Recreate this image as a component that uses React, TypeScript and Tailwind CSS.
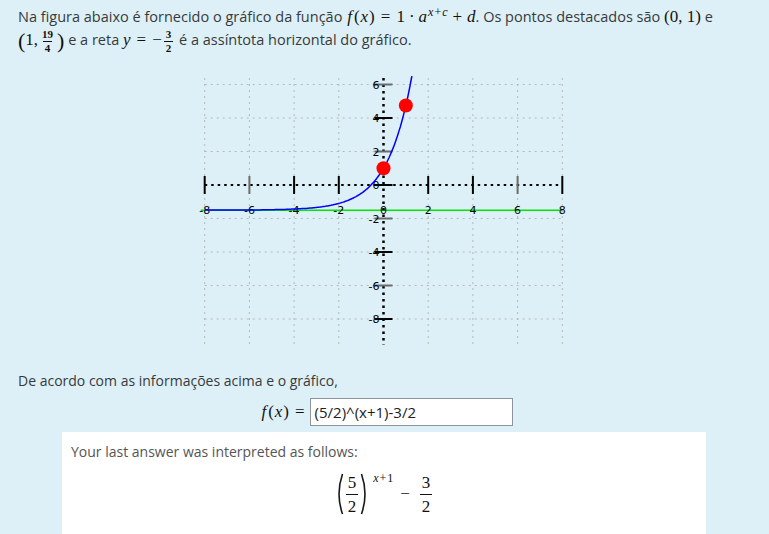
import React from "react";

const math = "font-['Liberation_Serif','DejaVu_Serif',serif] text-[17px] text-[#111]";

const Frac: React.FC<{ n: string; d: string; size?: string; pad?: string }> = ({ n, d, size = "text-[11px] font-bold", pad = "py-[1px]" }) => (
  <span className={`inline-flex flex-col items-center align-middle mx-[2px] leading-none ${size}`}>
    <span className={`px-[2px] ${pad}`}>{n}</span>
    <span className={`px-[2px] ${pad} border-t border-[#111]`}>{d}</span>
  </span>
);

const Op: React.FC<{ c: string; m?: string }> = ({ c, m = "mx-[5px]" }) => <span className={m}>{c}</span>;

const Fx: React.FC = () => (
  <>
    <i className="ml-[1px] mr-[2px]">f</i>(<i className="mx-[1px]">x</i>)
  </>
);

const BigParen: React.FC<{ right?: boolean }> = ({ right }) => (
  <svg width={8} height={42} viewBox="0 0 8 42" className="shrink-0">
    <path
      d={right ? "M1.5 1 Q8.5 21 1.5 41" : "M6.5 1 Q-0.5 21 6.5 41"}
      fill="none"
      stroke="#1a1a1a"
      strokeWidth={1.6}
    />
  </svg>
);

const X = (u: number) => 198.5 + 22.35 * u;
const Y = (v: number) => 120 - 16.75 * v;

const Graph: React.FC = () => {
  const evens = [-8, -6, -4, -2, 0, 2, 4, 6, 8];
  const yEvens = [6, 4, 2, 0, -2, -4, -6, -8];
  const grayX = [-6, 6];
  const grayY = [6, 2, -2, -6];
  const f = (u: number) => Math.pow(2.5, u + 1) - 1.5;
  const pts: string[] = [];
  for (let u = -8; u <= 1.27; u += 0.05) pts.push(`${X(u).toFixed(1)},${Y(f(u)).toFixed(1)}`);
  pts.push(`${X(1.27).toFixed(1)},${Y(f(1.27)).toFixed(1)}`);
  const label = { fontSize: 11, fontFamily: "'DejaVu Sans', sans-serif" };

  return (
    <svg width={400} height={290} viewBox="0 0 400 290">
      {/* grid */}
      {evens.map((u) =>
        u === 0 ? null : (
          <line key={`gv${u}`} x1={X(u)} x2={X(u)} y1={13} y2={280} stroke="#b4b8ba" strokeWidth={1} strokeDasharray="2 4" />
        )
      )}
      {yEvens.map((v) =>
        v === 0 ? null : (
          <line key={`gh${v}`} x1={X(-8)} x2={X(8)} y1={Y(v)} y2={Y(v)} stroke="#b4b8ba" strokeWidth={1} strokeDasharray="2 4" />
        )
      )}
      {/* asymptote */}
      <line x1={X(-8) - 4} x2={X(8)} y1={Y(-1.5)} y2={Y(-1.5)} stroke="#00e600" strokeWidth={1.5} />
      {/* axes */}
      <line x1={X(-8)} x2={X(8)} y1={Y(0)} y2={Y(0)} stroke="#000" strokeWidth={2} strokeDasharray="2.5 4" />
      <line x1={X(0)} x2={X(0)} y1={13} y2={280} stroke="#000" strokeWidth={2.5} strokeDasharray="2.5 4" />
      {evens.map((u) =>
        u === 0 ? null : (
          <line key={`tx${u}`} x1={X(u)} x2={X(u)} y1={Y(0) - 9} y2={Y(0) + 9} stroke={grayX.includes(u) ? "#6b6b6b" : "#000"} strokeWidth={2} />
        )
      )}
      {yEvens.map((v) => (
        <line key={`ty${v}`} x1={X(0) - 9} x2={X(0) + 9} y1={Y(v)} y2={Y(v)} stroke={grayY.includes(v) ? "#6b6b6b" : "#000"} strokeWidth={2} />
      ))}
      {/* labels */}
      {evens.map((u) => (
        <text key={`lx${u}`} x={X(u)} y={Y(-1.5) + 4} textAnchor="middle" style={label}>
          {u}
        </text>
      ))}
      {yEvens.map((v) => (
        <text key={`ly${v}`} x={X(0) - 4} y={Y(v) + 4} textAnchor="end" style={label}>
          {v}
        </text>
      ))}
      {/* curve */}
      <polyline points={pts.join(" ")} fill="none" stroke="#0000ff" strokeWidth={1.5} />
      <circle cx={X(0)} cy={Y(1)} r={7} fill="#ff0000" />
      <circle cx={X(1)} cy={Y(4.75)} r={7} fill="#ff0000" />
    </svg>
  );
};

export default function App() {
  return (
    <div className="h-[534px] overflow-hidden bg-[#def0f7] font-['Open_Sans','Noto_Sans',sans-serif] text-[14px] text-[#373a3c]">
      <div className="px-[18px] pt-[6px] leading-[22px] text-[14.5px]">
        <p>
          Na figura abaixo é fornecido o gráfico da função{" "}
          <span className={math}>
            <Fx />
            <Op c="=" m="mx-[6px]" />1<Op c="·" m="mx-[4px]" />
            <i>a</i>
            <sup className="text-[12px] ml-[1px]">
              <i>x</i>
              <span className="mx-[1px]">+</span>
              <i>c</i>
            </sup>
            <Op c="+" />
            <i>d</i>
          </span>
          . Os pontos destacados são <span className={math}>(0, 1)</span> e
          <br />
          <span className={math}>
            <span className="text-[22px] align-middle">(</span>1,
            <Frac n="19" d="4" />
            <span className="text-[22px] align-middle">)</span>
          </span>{" "}
          e a reta{" "}
          <span className={math}>
            <i>y</i>
            <Op c="=" m="mx-[6px]" />−<Frac n="3" d="2" />
          </span>{" "}
          é a assíntota horizontal do gráfico.
        </p>
      </div>

      <div className="flex justify-center mt-[10px]">
        <Graph />
      </div>

      <p className="px-[18px] mt-[16px] leading-[20px]">De acordo com as informações acima e o gráfico,</p>

      <div className="flex justify-center items-center mt-[7px] pl-[4px]">
        <span className={`${math} mr-[5px]`}>
          <Fx />
          <Op c="=" m="ml-[6px]" />
        </span>
        <div className="w-[203px] h-[28px] bg-white border border-[#8f959e] px-[4px] flex items-center text-[15px] text-[#1d2125]">
          (5/2)^(x+1)-3/2
        </div>
      </div>

      <div className="mt-[6px] ml-[62px] w-[644px] h-[200px] bg-white px-[9px] pt-[10px]">
        <p className="leading-[20px] text-[#555]">Your last answer was interpreted as follows:</p>
        <div className={`flex justify-center items-center mt-[10px] h-[44px] ${math}`}>
          <span className="flex items-center h-full ml-[2px]">
            <BigParen />
            <Frac n="5" d="2" size="text-[17px]" pad="py-[3px]" />
            <BigParen right />
            <span className="self-start text-[12px] -mt-[3px] ml-[5px]">
              <i>x</i>
              <span className="mx-[1px]">+</span>1
            </span>
            <span className="ml-[7px] mr-[8px]">−</span>
            <Frac n="3" d="2" size="text-[17px]" pad="py-[3px]" />
          </span>
        </div>
      </div>
    </div>
  );
}
